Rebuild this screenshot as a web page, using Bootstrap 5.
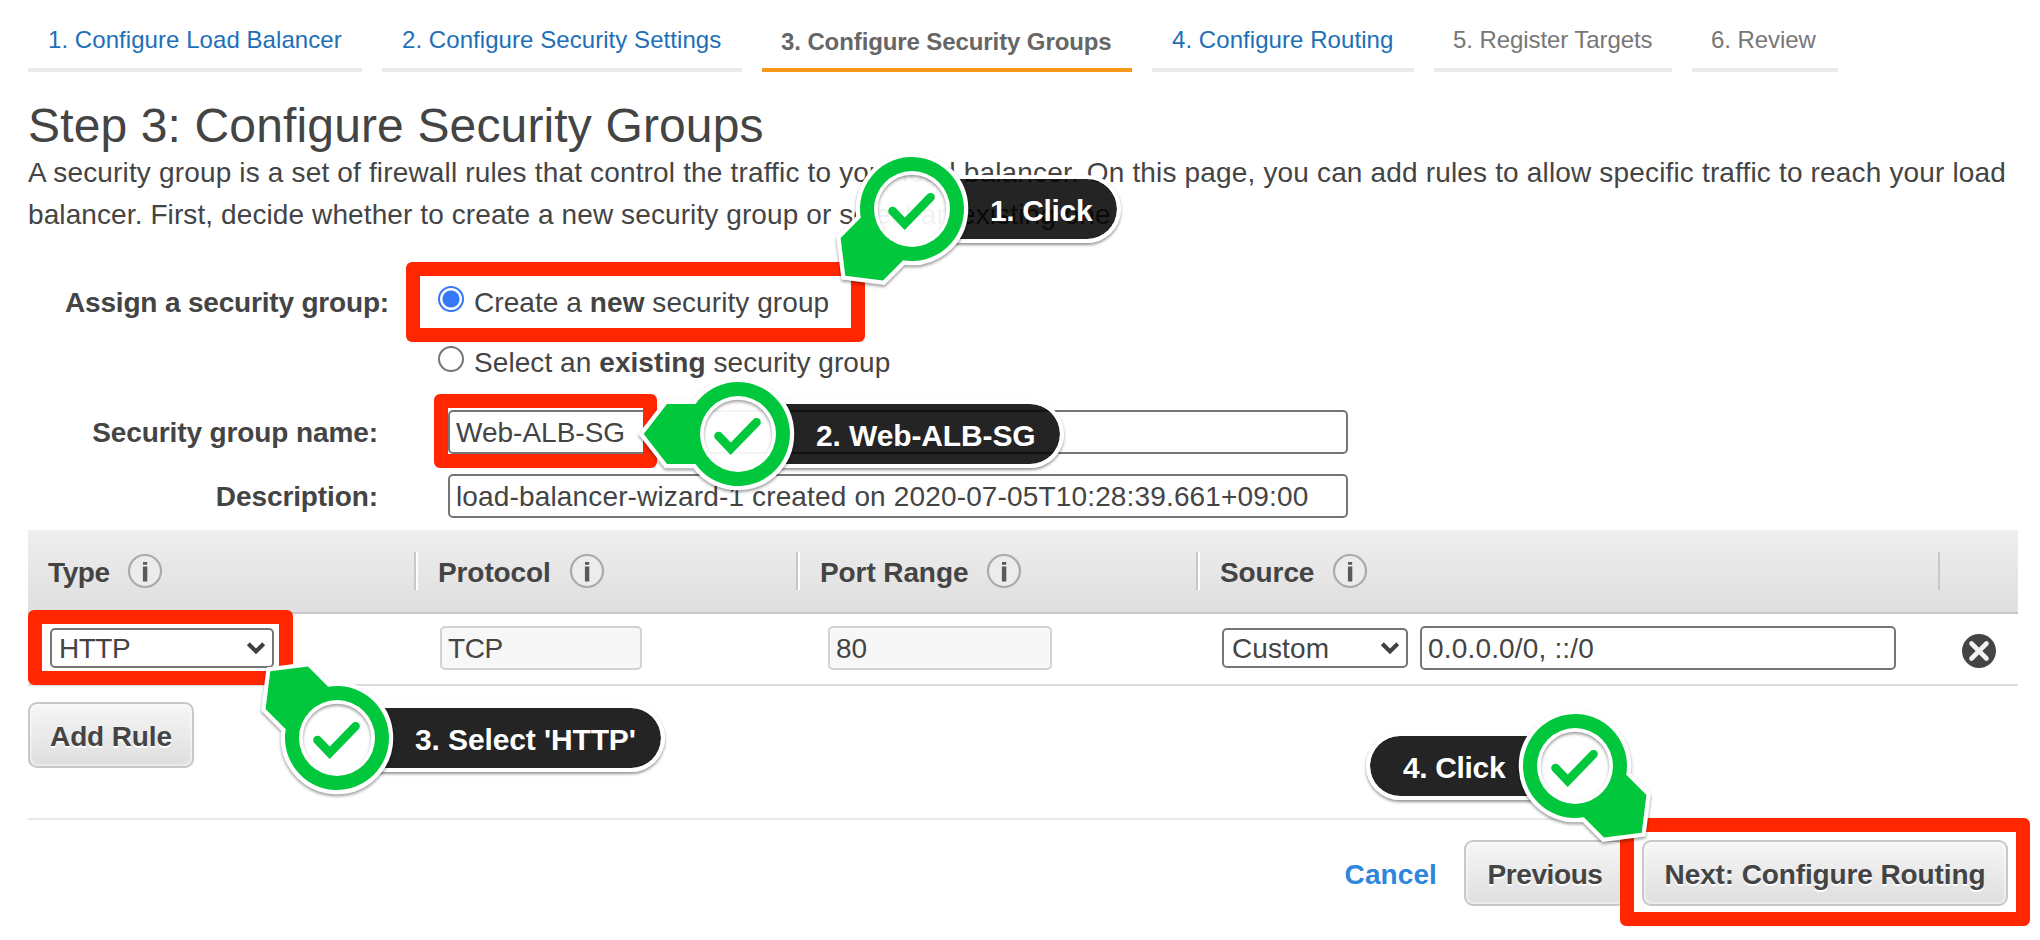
<!DOCTYPE html>
<html lang="en">
<head>
<meta charset="utf-8">
<title>Step 3: Configure Security Groups</title>
<link rel="stylesheet" href="https://cdn.jsdelivr.net/npm/bootstrap@5.3.0/dist/css/bootstrap.min.css">
<style>
body { font-family: "Liberation Sans", Arial, sans-serif; font-size: 28px; line-height: 42px; color: #444; background: #fff; overflow: hidden; }
.page { width: 2040px; height: 940px; padding: 0 22px 0 28px; overflow: hidden; }

.wizard { gap: 20px; }
.wizard .nav-link { height: 72px; padding: 22px 0 0 20px; border-bottom: 4px solid #eaeaea; font-size: 24px; line-height: 36px; color: #1d6fb8; white-space: nowrap; letter-spacing: .06px; }
.wizard .nav-link.active { padding-top: 24px; padding-left: 19px; border-color: #f7981d; color: #666; font-weight: 700; letter-spacing: -.1px; }
.wizard .nav-link.disabled { color: #777; letter-spacing: -.08px; padding-left: 19px; }
.w1 { width: 334px } .w2 { width: 360px } .w3 { width: 370px } .w4 { width: 262px } .w5 { width: 238px } .w6 { width: 146px }

h1 { margin: 28px 0 0; font-size: 48px; line-height: 52px; font-weight: 400; letter-spacing: .14px; }
.intro { letter-spacing: .163px; white-space: nowrap; }
.intro span { letter-spacing: .1px; }

.lbl { font-weight: 700; width: 350px; text-align: right; letter-spacing: -.1px; padding-top: 2px; }
.lbl.wide { width: 361px; letter-spacing: -.18px; }
.opts { margin-top: 36px; }
.opt { height: 60px; gap: 10px; }
.opt span { padding-top: 2px; letter-spacing: .07px; }
.opt .form-check-input { width: 26px; height: 26px; margin: 0 0 6px; border: 2px solid #767676; background: #fff; }
.opt .form-check-input:checked { border-color: #3478f6; background: radial-gradient(circle, #3478f6 8px, #fff 9px); }
.fields { margin-top: 18px; gap: 20px; }
.fields .form-control { margin-left: 70px; width: 900px; }

.form-control, .form-select { height: 44px; padding: 2px 6px 0; border: 2px solid #767676; border-radius: 5px; font-size: 28px; line-height: 38px; color: #444; background-color: #fff; }
.form-control:disabled { background: #f7f7f7; border-color: #d2d2d2; color: #444; opacity: 1; }
.form-select { height: 40px; padding: 2px 7px 0; line-height: 34px; background-image: url("data:image/svg+xml,%3Csvg xmlns='http://www.w3.org/2000/svg' viewBox='0 0 20 14'%3E%3Cpath d='M2.3 2.8L10 10.4L17.7 2.8' fill='none' stroke='%23404040' stroke-width='4.2'/%3E%3C/svg%3E"); background-size: 20px 14px; background-position: right 6px center; }

.rules { margin-top: 12px; width: 1990px; }
.rules-head { height: 84px; border-bottom: 2px solid #c8c8c8; background: linear-gradient(#eee, #dfdfdf); font-weight: 700; }
.rules-head > div { position: relative; gap: 18px; padding-left: 24px; letter-spacing: -.1px; }
.rules-head > div:first-child { padding-left: 20px; gap: 17px; letter-spacing: -.4px; }
.rules-head > div + div::before { content: ""; position: absolute; left: 0; top: 22px; height: 38px; width: 4px; background: linear-gradient(90deg, #c8c8c8 50%, #fff 50%); }
.rules-head > div:last-child::before { width: 2px; background: #c8c8c8; }
.rules-head span { padding-top: 4px; }
.rules-row { height: 72px; padding-bottom: 2px; border-bottom: 2px solid #ddd; }
.c1 { width: 386px } .c2 { width: 382px } .c3 { width: 400px } .c4 { width: 742px } .c5 { width: 80px }
.rules-row .c1 { padding-left: 22px } .rules-row .c2 { padding-left: 26px } .rules-row .c3 { padding-left: 32px }
.rules-row .c4 { padding-left: 26px; gap: 12px } .rules-row .c5 { padding: 5px 0 0 24px }
.s-type { width: 224px; letter-spacing: -.5px } .s-proto { width: 202px; letter-spacing: -.4px } .s-port { width: 224px }
.form-select.s-src { width: 186px; padding-left: 8px; letter-spacing: .1px } .s-cidr { width: 476px; letter-spacing: .17px }

.btn-aws { height: 66px; padding: 4px 0 0; border: 2px solid #c8c8c8; border-radius: 9px; background: linear-gradient(#f6f6f6, #dedede); box-shadow: inset 0 0 3px 1px rgba(255,255,255,.75); color: #444; font-size: 28px; line-height: 42px; font-weight: 700; text-shadow: 0 2px 0 #fff; letter-spacing: -.12px; }
.b-add { width: 166px; margin-top: 16px; }
.b-prev { width: 162px; letter-spacing: -.4px }
.b-next { width: 366px; }
.foot { width: 1990px; margin-top: 50px; padding: 20px 10px 0 0; border-top: 2px solid #e9e9e9; gap: 16px; }
.cancel { color: #2f86dd; font-weight: 700; text-decoration: none; padding-top: 4px; margin-right: 11px; letter-spacing: .1px; }

/* Tutorial annotations lying over the page */
.frame { position: absolute; border: 14px solid #ff2600; border-radius: 6px; }
.pin { position: absolute; width: 0; height: 0; }
.pin svg { position: absolute; left: -110px; top: -110px; }
.pin .cast { filter: drop-shadow(0 2px 1.5px rgba(0,0,0,.38)); }
.pill { position: absolute; left: 42px; top: -34px; height: 68px; padding: 12px 0 0 36px; border: 4px solid #fff; border-left: 0; border-radius: 0 34px 34px 0; background: rgba(0,0,0,.86); background-clip: padding-box; box-shadow: 0 2px 3px rgba(0,0,0,.42); color: #fff; font-size: 30px; line-height: 40px; font-weight: 700; white-space: nowrap; letter-spacing: -.12px; }
.pin.left .pill { left: auto; right: 42px; border: 4px solid #fff; border-right: 0; border-radius: 34px 0 0 34px; padding-left: 33px; }
</style>
</head>
<body>
<svg class="d-none">
  <symbol id="info" viewBox="0 0 36 36">
    <circle cx="18" cy="18" r="16" fill="#ececec" stroke="#aaa" stroke-width="2.2"/>
    <path d="M16 9h4.2v2.8H16zM15.9 13.5h4.4v15h-4.4z" fill="#5a5a5a"/>
  </symbol>
  <symbol id="head" viewBox="-110 -110 220 220">
    <path d="M42.5-30H71L94.3 0 71 30H42.5A52 52 0 1 1 42.5-30Z" fill="none" stroke="#fff" stroke-width="8.5"/>
    <circle r="36.5" fill="none" stroke="#fff" stroke-width="4.5"/>
    <path fill-rule="evenodd" d="M42.5-30H71L94.3 0 71 30H42.5A52 52 0 1 1 42.5-30ZM38 0A38 38 0 1 0-38 0A38 38 0 1 0 38 0Z" fill="#00c73c"/>
  </symbol>
  <symbol id="disc" viewBox="-110 -110 220 220">
    <circle r="37" fill="#fff" fill-opacity=".93"/>
  </symbol>
  <symbol id="tick" viewBox="-110 -110 220 220">
    <path d="M-19.5 2L-7.3 14.8L18.5-11.8" fill="none" stroke="#00c73c" stroke-width="8.6" stroke-linecap="round"/>
  </symbol>
</svg>

<div class="page position-relative">
  <nav class="nav wizard flex-nowrap">
    <a class="nav-link w1" href="#">1. Configure Load Balancer</a>
    <a class="nav-link w2" href="#">2. Configure Security Settings</a>
    <a class="nav-link w3 active" href="#">3. Configure Security Groups</a>
    <a class="nav-link w4" href="#">4. Configure Routing</a>
    <a class="nav-link w5 disabled">5. Register Targets</a>
    <a class="nav-link w6 disabled">6. Review</a>
  </nav>

  <h1>Step 3: Configure Security Groups</h1>
  <p class="intro mb-0">A security group is a set of firewall rules that control the traffic to your load balancer. On this page, you can add rules to allow specific traffic to reach your load<br><span>balancer. First, decide whether to create a new security group or select an existing one.</span></p>

  <div class="opts d-flex">
    <div class="lbl wide d-flex align-items-center justify-content-end opt">Assign a security group:</div>
    <div style="margin-left:49px">
      <label class="opt d-flex align-items-center"><input class="form-check-input" type="radio" name="sg" checked><span>Create a <b>new</b> security group</span></label>
      <label class="opt d-flex align-items-center"><input class="form-check-input" type="radio" name="sg"><span>Select an <b>existing</b> security group</span></label>
    </div>
  </div>

  <div class="fields d-flex flex-column">
    <div class="d-flex align-items-center"><label class="lbl">Security group name:</label><input class="form-control" value="Web-ALB-SG"></div>
    <div class="d-flex align-items-center"><label class="lbl">Description:</label><input class="form-control" style="letter-spacing:.15px" value="load-balancer-wizard-1 created on 2020-07-05T10:28:39.661+09:00"></div>
  </div>

  <div class="rules">
    <div class="rules-head d-flex">
      <div class="c1 d-flex align-items-center"><span>Type</span><svg width="36" height="36"><use href="#info"/></svg></div>
      <div class="c2 d-flex align-items-center"><span>Protocol</span><svg width="36" height="36"><use href="#info"/></svg></div>
      <div class="c3 d-flex align-items-center"><span>Port Range</span><svg width="36" height="36"><use href="#info"/></svg></div>
      <div class="c4 d-flex align-items-center"><span>Source</span><svg width="36" height="36"><use href="#info"/></svg></div>
      <div class="c5"></div>
    </div>
    <div class="rules-row d-flex align-items-center">
      <div class="c1"><select class="form-select s-type"><option>HTTP</option></select></div>
      <div class="c2"><input class="form-control s-proto" value="TCP" disabled></div>
      <div class="c3"><input class="form-control s-port" value="80" disabled></div>
      <div class="c4 d-flex align-items-center"><select class="form-select s-src"><option>Custom</option></select><input class="form-control s-cidr" value="0.0.0.0/0, ::/0"></div>
      <div class="c5 d-flex"><svg width="34" height="34" viewBox="-17 -17 34 34"><circle r="17" fill="#444"/><path d="M-7.5-7.5L7.5 7.5M7.5-7.5L-7.5 7.5" stroke="#f2f2f2" stroke-width="4.6" stroke-linecap="round"/></svg></div>
    </div>
    <button class="btn btn-aws b-add d-block">Add Rule</button>
  </div>

  <div class="foot d-flex justify-content-end align-items-center">
    <a class="cancel" href="#">Cancel</a>
    <button class="btn btn-aws b-prev">Previous</button>
    <button class="btn btn-aws b-next">Next: Configure Routing</button>
  </div>

  <div class="frame" style="left:406px;top:262px;width:459px;height:80px"></div>
  <div class="frame" style="left:434px;top:394px;width:223px;height:74px"></div>
  <div class="frame" style="left:28px;top:610px;width:265px;height:75px"></div>
  <div class="frame" style="left:1620px;top:818px;width:410px;height:108px"></div>

  <div class="pin" style="left:912px;top:209px">
    <div class="pill" style="width:167px;letter-spacing:-.35px">1. Click</div>
    <svg width="220" height="220"><use href="#disc"/></svg>
    <svg class="cast" width="220" height="220"><use href="#head" transform="rotate(135 110 110)"/></svg>
    <svg width="220" height="220"><use href="#tick"/></svg>
  </div>
  <div class="pin" style="left:738px;top:434px">
    <div class="pill" style="width:284px">2. Web-ALB-SG</div>
    <svg width="220" height="220"><use href="#disc"/></svg>
    <svg class="cast" width="220" height="220"><use href="#head" transform="rotate(180 110 110)"/></svg>
    <svg width="220" height="220"><use href="#tick"/></svg>
  </div>
  <div class="pin" style="left:337px;top:738px">
    <div class="pill" style="width:286px">3. Select 'HTTP'</div>
    <svg width="220" height="220"><use href="#disc"/></svg>
    <svg class="cast" width="220" height="220"><use href="#head" transform="rotate(225 110 110)"/></svg>
    <svg width="220" height="220"><use href="#tick"/></svg>
  </div>
  <div class="pin left" style="left:1575px;top:766px">
    <div class="pill" style="width:167px;letter-spacing:-.35px">4. Click</div>
    <svg width="220" height="220"><use href="#disc"/></svg>
    <svg class="cast" width="220" height="220"><use href="#head" transform="rotate(45 110 110)"/></svg>
    <svg width="220" height="220"><use href="#tick"/></svg>
  </div>
</div>
<script src="https://cdn.jsdelivr.net/npm/bootstrap@5.3.0/dist/js/bootstrap.bundle.min.js"></script>
</body>
</html>
